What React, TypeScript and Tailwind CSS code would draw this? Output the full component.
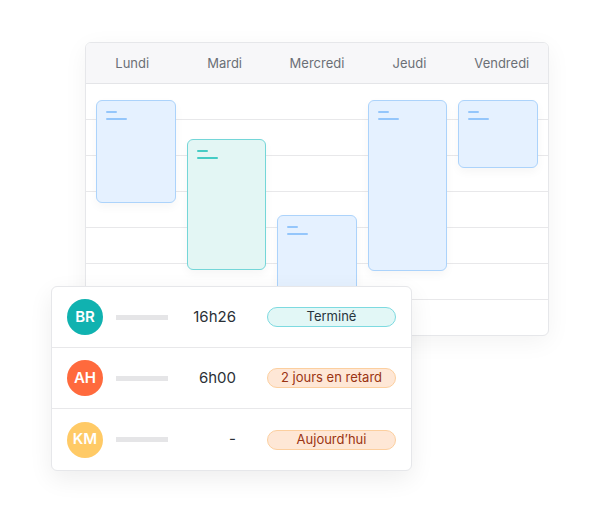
import React from "react";

const days = ["Lundi", "Mardi", "Mercredi", "Jeudi", "Vendredi"];

interface Block {
  top: string;
  height: string;
  teal?: boolean;
}

const blocks: Block[] = [
  { top: "mt-[16px]", height: "h-[103px]" },
  { top: "mt-[55px]", height: "h-[131px]", teal: true },
  { top: "mt-[131px]", height: "h-[100px]" },
  { top: "mt-[16px]", height: "h-[171px]" },
  { top: "mt-[16px]", height: "h-[68px]" },
];

const rows = [
  {
    initials: "BR",
    avatar: "bg-[#10b2b0]",
    time: "16h26",
    badge: "Terminé",
    badgeClass: "bg-[#e2f7f6] border-[#7ddae0] text-[#27343c]",
  },
  {
    initials: "AH",
    avatar: "bg-[#ff6a3d]",
    time: "6h00",
    badge: "2 jours en retard",
    badgeClass: "bg-[#fee7d6] border-[#fccf9f] text-[#9a3412]",
  },
  {
    initials: "KM",
    avatar: "bg-[#ffca66]",
    time: "-",
    badge: "Aujourd’hui",
    badgeClass: "bg-[#fee7d6] border-[#fccf9f] text-[#9a3412]",
  },
];

const EventBlock: React.FC<Block> = ({ top, height, teal }) => (
  <div
    className={`${top} ${height} rounded-md border pl-[9px] pt-[10px] shadow-[0_4px_10px_rgba(0,0,0,0.04)] ${
      teal ? "bg-[#e3f6f4] border-[#74d6d8]" : "bg-[#e5f1ff] border-[#acd3fb]"
    }`}
  >
    <div className={`h-[2px] w-[11px] rounded ${teal ? "bg-[#45ccc5]" : "bg-[#94c6fb]"}`} />
    <div className={`mt-[5px] h-[2px] w-[21px] rounded ${teal ? "bg-[#45ccc5]" : "bg-[#94c6fb]"}`} />
  </div>
);

export default function App() {
  return (
    <div className="relative h-[514px] w-[600px] bg-white font-['Inter',sans-serif]">
      {/* calendar */}
      <div className="absolute left-[85px] top-[42px] h-[294px] w-[464px] overflow-hidden rounded-md border border-[#e6e7ea] bg-white shadow-[0_6px_24px_rgba(0,0,0,0.05)]">
        <div className="grid h-[41px] grid-cols-5 border-b border-[#e4e5e8] bg-[#f7f7f9]">
          {days.map((d) => (
            <div key={d} className="flex items-center justify-center pt-[1px] text-[13px] text-[#6b6f76]">
              {d}
            </div>
          ))}
        </div>
        <div className="relative">
          {Array.from({ length: 7 }).map((_, i) => (
            <div key={i} className="h-[36px] border-b border-[#e8e8ea]" />
          ))}
          <div className="absolute inset-0 grid grid-cols-5 gap-[11px] px-[10px]">
            {blocks.map((b, i) => (
              <div key={i}>
                <EventBlock {...b} />
              </div>
            ))}
          </div>
        </div>
      </div>

      {/* list */}
      <div className="absolute left-[51px] top-[286px] w-[361px] rounded-md border border-[#e6e7ea] bg-white shadow-[0_8px_24px_rgba(0,0,0,0.07)]">
        {rows.map((r, i) => (
          <div
            key={r.initials}
            className={`flex h-[61px] items-center px-[15px] ${i < rows.length - 1 ? "border-b border-[#e8e8ea]" : ""}`}
          >
            <div
              className={`flex h-[36px] w-[36px] items-center justify-center rounded-full text-[15px] font-semibold text-white ${r.avatar}`}
            >
              {r.initials}
            </div>
            <div className="ml-[13px] h-[5px] w-[52px] bg-[#e5e5e7]" />
            <div className="w-[68px] text-right text-[15px] text-[#2b3036]">{r.time}</div>
            <div
              className={`ml-auto flex h-[20px] w-[129px] items-center justify-center rounded-full border text-[13px] ${r.badgeClass}`}
            >
              {r.badge}
            </div>
          </div>
        ))}
      </div>
    </div>
  );
}
